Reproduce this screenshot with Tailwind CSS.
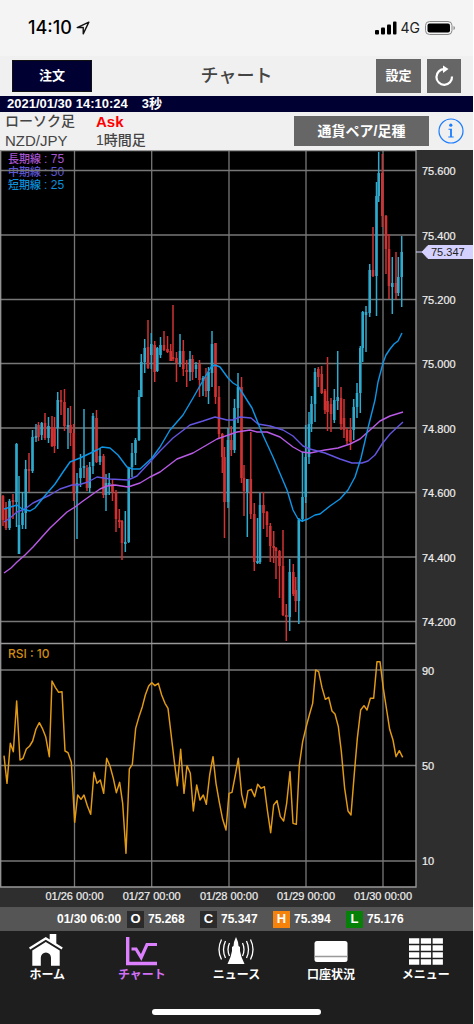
<!DOCTYPE html>
<html lang="ja">
<head>
    <meta charset="UTF-8">
    <meta name="viewport" content="width=device-width, initial-scale=1.0">
    <title>チャート</title>
    <script src="https://cdn.jsdelivr.net/npm/@tailwindcss/browser@4"></script>
</head>
<body class="bg-white min-h-screen flex flex-col pr-px font-['Liberation_Sans','Noto_Sans_CJK_JP',sans-serif]">
    <!-- Status bar -->
    <div class="bg-[#f4f4f4] h-14 flex items-center justify-between pl-7 pr-4">
        <div class="flex items-center gap-1 text-black">
            <span class="text-[18px] leading-6 font-medium font-['Inter',sans-serif]">14:10</span>
            <svg class="w-3.5 h-3.5" viewBox="0 0 12 12" fill="none" stroke="#111" stroke-width="1.2" stroke-linejoin="round"><path d="M11 1 1 5.6h5.2V11z"/></svg>
        </div>
        <div class="flex items-center gap-1">
            <svg class="w-[22px] h-[14px]" viewBox="0 0 22 14" fill="#000"><rect x="0" y="9" width="4" height="4.5" rx="1"/><rect x="6" y="6.5" width="4" height="7" rx="1"/><rect x="12" y="3.5" width="4" height="10" rx="1"/><rect x="18" y="0.5" width="3.5" height="13" rx="1"/></svg>
            <span class="text-[14px] leading-5 font-['Inter',sans-serif] text-[#222]">4G</span>
            <svg class="w-[32px] h-[14px] ml-px" viewBox="0 0 32 14"><rect x="0.5" y="0.5" width="26.5" height="13" rx="4" fill="none" stroke="#888"/><rect x="2.5" y="2.5" width="22.5" height="9" rx="2" fill="#000"/><path d="M28.5 5v4q1.5-.6 1.5-2t-1.5-2z" fill="#888"/></svg>
        </div>
    </div>

    <!-- Title bar -->
    <header class="bg-[#f0f0f0] h-10 grid grid-cols-[1fr_auto_1fr] items-center px-3">
        <button class="justify-self-start w-20 h-8 bg-[#000033] border border-[#111] text-white text-[13px] font-bold">注文</button>
        <h1 class="text-[18px] leading-6 font-medium text-[#444]">チャート</h1>
        <div class="justify-self-end flex gap-[6px]">
            <button class="w-[45px] h-[34px] bg-[#666] text-white text-[13px] font-bold">設定</button>
            <button aria-label="更新" class="w-[34px] h-[34px] bg-[#666] flex items-center justify-center">
                <svg class="w-[22px] h-[22px]" viewBox="0 0 22 22"><path d="M11.5 4.2A7.8 7.8 0 1 0 19 11.5" fill="none" stroke="#fff" stroke-width="2.2"/><path d="M10 0.5 15.5 4 10 8z" fill="#fff"/></svg>
            </button>
        </div>
    </header>

    <div class="bg-[#000033] h-4 flex items-center pl-[7px] gap-[14px] text-white text-[13px] leading-4 font-bold">
        <span>2021/01/30 14:10:24</span><span>3秒</span>
    </div>

    <section class="bg-[#f0f0f0] h-[38px] flex items-center pl-[5px] pr-[9px]">
        <div class="grid grid-cols-[91px_auto] text-[14px] leading-[19px] text-[#444] font-medium">
            <span>ローソク足</span>
            <span class="text-[15px] font-bold text-[#ff0000]">Ask</span>
            <span class="text-[15px]">NZD/JPY</span>
            <span>1時間足</span>
        </div>
        <button class="ml-auto w-[135px] h-[30px] bg-[#666] text-white text-[14px] font-bold">通貨ペア/足種</button>
        <button aria-label="情報" class="ml-[9px]">
            <svg class="w-[26px] h-[26px]" viewBox="0 0 26 26"><circle cx="13" cy="13" r="12" fill="none" stroke="#1a7cff" stroke-width="1.2"/><circle cx="12.8" cy="7.2" r="1.6" fill="#1a7cff"/><path d="M10.5 10.8h3.4v7.7h1.8v1h-5.4v-1h1.8v-6.7h-1.6z" fill="#1a7cff"/></svg>
        </button>
    </section>

    <!-- Price and RSI chart -->
    <svg class="block w-full bg-[#2e2e2e]" viewBox="0 150 473 757" font-family="'Liberation Sans','Noto Sans CJK JP',sans-serif">
        <rect x="0" y="150" width="416" height="737" fill="#000"/>
        <g font-size="11" font-weight="500">
            <text x="8" y="163" fill="#a855d0">長期線 <tspan font-size="12">: 75</tspan></text>
            <text x="8" y="176" fill="#5c55d6">中期線 <tspan font-size="12">: 50</tspan></text>
            <text x="8" y="189" fill="#0a90dc">短期線 <tspan font-size="12">: 25</tspan></text>
        </g>
        <path fill="none" stroke="#777" stroke-width="1.3" d="M0 170.5H416M0 235H416M0 299.5H416M0 363.5H416M0 428H416M0 492.5H416M0 557H416M0 621.5H416M0 670H416M0 765.5H416M0 861H416M74.5 150V887M151.7 150V887M229 150V887M306 150V887M383 150V887"/>
        <path fill="none" stroke="#999" stroke-width="1.3" d="M0.7 150.7H416V887H0.7zM0 643.5H416"/>
        <g id="candles"></g>
        <g fill="none" stroke-width="1.4" stroke-linejoin="round">
            <polyline stroke="#b95ae6" points="4,573 11,568 17,562 25,555 33,547 50,528 67,512 75,507 83,501 100,489 107,486 115,485 128,487 140,483 150,477 160,472 177,459 193,453 205,446 217,439 237,432 250,430 257,432 267,432 280,437 293,447 302,452 310,453 325,450 338,448 350,444 360,439 370,430 380,421 390,416 403,412"/>
            <polyline stroke="#6355e0" points="4,522 10,518 17,512 25,509 33,503 50,495 60,489 72,485 78,485 88,482 97,477 110,479 128,480 137,476 150,462 160,451 173,438 190,425 203,421 215,417 227,420 233,420 240,417 251,418 258,424 270,426 283,430 293,436 303,446 310,449 325,453 340,459 352,463 362,463 368,461 375,455 382,444 390,434 403,422"/>
            <polyline stroke="#0c96e8" points="4,509 17,505 22,509 30,511 35,508 43,498 55,484 63,472 70,462 80,458 97,450 102,447 110,448 118,455 127,467 133,469 140,469 152,458 160,447 170,430 183,415 193,398 205,377 211,367 215,365 220,367 228,378 233,383 238,386 245,397 252,408 262,433 273,457 287,490 293,510 298,519 302,521 308,519 315,515 320,514 330,506 340,499 348,490 355,477 361,458 368,428 375,400 378,382 383,363 386,355 390,349 394,344 398,341 402,333"/>
        </g>
        <!-- RSI points are kept in thirds of a pixel -->
        <polyline transform="translate(0 640) scale(0.33333)" fill="none" stroke="#e29a14" stroke-width="4.4" stroke-linejoin="round" points="12,347 21,430 31,310 40,335 50,183 60,360 69,355 79,327 89,318 98,303 108,267 118,248 127,265 137,290 148,350 156,123 166,142 176,157 186,155 195,333 204,338 214,367 224,547 233,465 243,478 252,465 262,497 272,523 282,397 291,430 301,420 311,460 320,355 330,378 340,415 349,458 359,427 368,490 378,640 388,387 397,373 407,265 417,230 427,200 436,165 446,138 455,128 465,137 475,130 485,165 495,190 504,205 513,280 523,365 532,437 542,328 552,460 561,377 571,400 580,513 590,435 600,480 610,465 619,493 629,405 639,350 648,430 658,487 668,538 678,570 687,460 696,457 706,405 715,355 725,463 735,503 744,452 754,448 764,470 773,433 783,445 793,440 802,510 812,578 821,495 831,482 841,530 851,543 860,490 870,395 879,550 889,553 898,375 908,305 918,263 928,225 938,190 947,90 956,95 966,143 976,178 986,172 996,213 1005,222 1015,260 1024,335 1034,445 1044,513 1053,525 1063,400 1072,295 1082,210 1092,197 1101,210 1111,175 1121,175 1131,65 1140,65 1150,145 1160,210 1169,268 1179,300 1188,350 1198,332 1208,352"/>
        <text x="8" y="658" font-size="12" font-weight="500" font-family="Inter,sans-serif" fill="#d08c10">RSI : 10</text>
        <g font-size="11" fill="#eee" stroke="#eee" stroke-width="0.2">
            <text x="422" y="175">75.600</text>
            <text x="422" y="240">75.400</text>
            <text x="422" y="304">75.200</text>
            <text x="422" y="368">75.000</text>
            <text x="422" y="433">74.800</text>
            <text x="422" y="497">74.600</text>
            <text x="422" y="562">74.400</text>
            <text x="422" y="626">74.200</text>
            <text x="422" y="675">90</text>
            <text x="422" y="770">50</text>
            <text x="422" y="865">10</text>
            <g text-anchor="middle">
                <text x="74.5" y="900">01/26 00:00</text>
                <text x="151.7" y="900">01/27 00:00</text>
                <text x="229" y="900">01/28 00:00</text>
                <text x="306" y="900">01/29 00:00</text>
                <text x="383" y="900">01/30 00:00</text>
            </g>
        </g>
        <path d="M416 252h6l6-6.5h45v13h-45l-6-6.5" fill="#d4d0ff" stroke="#d4d0ff"/>
        <text x="431" y="256" font-size="11" fill="#222">75.347</text>
    </svg>

    <!-- Selected candle values -->
    <div class="bg-[#555] h-6 flex items-center text-white text-[12px] leading-4 font-bold pl-[57px] gap-[15px]">
        <div class="flex items-center gap-1">
            <span class="w-[66px]">01/30 06:00</span>
            <span class="w-[17px] h-[17px] bg-[#2b2b2b] flex items-center justify-center text-[13px]">O</span>
            <span class="w-[37px]">75.268</span>
        </div>
        <div class="flex items-center gap-1">
            <span class="w-[17px] h-[17px] bg-[#2b2b2b] flex items-center justify-center text-[13px]">C</span>
            <span class="w-[37px]">75.347</span>
        </div>
        <div class="flex items-center gap-1">
            <span class="w-[17px] h-[17px] bg-[#f5820a] flex items-center justify-center text-[13px]">H</span>
            <span class="w-[37px]">75.394</span>
        </div>
        <div class="flex items-center gap-1">
            <span class="w-[17px] h-[17px] bg-[#078007] flex items-center justify-center text-[13px]">L</span>
            <span class="w-[37px]">75.176</span>
        </div>
    </div>

    <!-- Tab bar -->
    <footer class="bg-[#1e1e1e] grow flex flex-col justify-between">
        <nav class="flex text-white text-[12px] leading-4 font-bold pt-[2px]">
            <a href="#" class="flex-1 flex flex-col items-center">
                <svg class="w-[36px] h-[33px]" viewBox="0 0 36 33" fill="#fff"><path d="M16.8 4 20.7 6.4V1h6.6v9.4L33.8 14.5l-1.2 2L16.8 6.8 1.2 16.5 0 14.5z"/><path d="M16.8 9 30.7 17.6V32.7H22v-8a5.1 5.3 0 0 0-10.2 0v8H3.3V17.6z"/></svg>
                <span class="mt-px">ホーム</span>
            </a>
            <a href="#" class="flex-1 flex flex-col items-center text-[#d070f5]">
                <svg class="w-[36px] h-[33px]" viewBox="0 0 36 33" fill="none" stroke="#dc80ff"><path d="M3.7 4v26.5H33" stroke-width="3.4"/><path d="M7.5 16h4.5l5.2 8.5L23 11.5H33" stroke-width="3.2"/></svg>
                <span class="mt-px">チャート</span>
            </a>
            <a href="#" class="flex-1 flex flex-col items-center">
                <svg class="w-[40px] h-[33px]" viewBox="0 0 40 33" fill="none" stroke="#fff" stroke-width="1.3"><path fill="#fff" stroke="none" d="M20 4l2 5 .5 4 1.5 1v4l1.5 6 3 7H11.5l3-7 1.5-6v-4l1.5-1 .5-4z"/><path d="M13.5 10q-3 6.5 0 13M9.5 8q-4 8.5 0 17M5.5 6.5q-5 10 0 20M26.5 10q3 6.5 0 13M30.5 8q4 8.5 0 17M34.5 6.5q5 10 0 20"/></svg>
                <span class="mt-px">ニュース</span>
            </a>
            <a href="#" class="flex-1 flex flex-col items-center">
                <svg class="w-[34px] h-[33px]" viewBox="0 0 34 33"><rect x="0.5" y="8" width="33" height="21" rx="2.5" fill="#fff"/><path d="M0.5 23.5h33" stroke="#999" stroke-width="1.5"/></svg>
                <span class="mt-px">口座状況</span>
            </a>
            <a href="#" class="flex-1 flex flex-col items-center">
                <svg class="w-[34px] h-[33px]" viewBox="0 0 34 33" fill="none" stroke="#fff" stroke-width="5.7"><path stroke-dasharray="10.3 1.5" d="M0 8h34M0 15h34M0 22h34M0 29h34"/></svg>
                <span class="mt-px">メニュー</span>
            </a>
        </nav>
        <div class="mx-auto mb-[9px] w-[169px] h-[6px] rounded-full bg-white"></div>
    </footer>

    <script>
        // x, high, low, body top, body bottom, up (1) or down (0)
        const candles = [
            [3,495,526,496,520,0],[6,502,530,509,528,0],[9.5,499,530,501,528,1],[13,494,519,500,502,0],[16.5,443,527,444,502,1],
            [19,476,554,525,554,1],[22.5,492,529,513,525,1],[25.7,460,529,469,513,1],[29,453,492,469,471,0],[32.5,430,473,437,471,1],
            [36,424,442,436,438,1],[38.5,422,441,425,437,0],[41.7,422,440,423,435,1],[45,413,440,423,438,0],[48.5,417,443,426,438,1],
            [52,416,447,427,446,0],[54.5,417,453,428,446,0],[57.7,392,449,400,428,1],[61,390,415,400,402,0],[64.5,389,431,402,426,0],
            [68,408,449,425,427,1],[70.5,406,446,425,433,0],[73.7,424,501,433,493,0],[77,473,539,483,493,1],[80.5,454,487,468,478,1],
            [84,409,478,466,468,1],[87,465,491,468,488,0],[89.7,462,493,467,488,1],[93,413,474,416,466,1],[96.5,410,463,418,462,0],
            [100,448,465,456,462,1],[103.5,454,498,456,495,0],[106,474,511,483,495,1],[109.2,473,495,483,485,1],[112.5,479,501,484,492,0],
            [116,490,532,492,519,0],[119.3,509,528,520,522,0],[122,520,560,521,543,0],[125.3,511,552,542,544,1],[128.7,468,543,468,542,1],
            [132,443,477,453,467,1],[135.5,438,465,440,453,1],[139,390,441,397,440,1],[141.3,354,397,362,397,1],[144.7,339,373,348,362,1],
            [148,320,369,347,368,0],[151.3,333,369,344,355,1],[154.7,341,382,345,372,0],[157.3,347,372,348,371,1],[160.5,337,358,345,355,1],
            [164,331,351,345,350,0],[167.5,336,353,349,352,0],[170.7,344,361,351,361,0],[173,305,361,357,359,0],[176.5,352,382,358,363,0],
            [180,334,367,351,363,1],[183.3,340,376,351,369,0],[186.7,360,387,370,372,0],[190,351,381,359,372,1],[192.5,355,380,359,372,0],
            [196,362,378,365,369,1],[199.5,360,397,364,380,0],[203,376,396,378,381,1],[206,368,397,377,391,0],[208.5,367,404,372,391,1],
            [212,331,387,344,373,1],[215.5,343,404,343,397,0],[219,386,439,397,434,0],[222.3,433,473,434,457,0],[224.5,447,538,457,502,0],
            [228,428,508,440,502,1],[231.3,426,456,440,450,0],[234.5,399,453,408,450,1],[238,373,423,387,408,1],[241.5,377,483,387,478,0],
            [244,465,516,478,491,0],[247.3,479,537,479,492,1],[250.8,432,519,479,514,0],[254.3,503,571,514,562,0],[257.5,518,564,561,563,1],
            [260,493,564,505,562,1],[263.5,492,529,505,513,0],[267,511,537,512,525,0],[270.3,523,562,526,546,0],[273.7,531,563,546,548,0],
            [276,547,579,548,551,0],[279.5,550,598,551,566,0],[283,530,616,566,615,0],[286.3,604,641,615,617,0],[289.7,559,631,572,617,1],
            [293.3,564,596,572,594,0],[295.7,577,612,590,601,0],[298.8,518,624,520,601,1],[302.5,452,522,497,519,1],[305.7,425,503,457,497,1],
            [309,412,464,424,457,1],[311.5,396,432,404,424,1],[315,368,422,372,404,1],[318.3,367,387,369,377,0],[321.7,366,394,374,393,0],
            [325,389,414,391,410,0],[327.5,357,431,401,412,0],[331,398,432,404,414,0],[334.3,389,423,400,420,1],[337.7,351,410,397,401,1],
            [341,387,430,398,424,0],[344,399,438,418,430,0],[347,428,444,430,441,0],[350.5,418,450,430,442,0],[353.7,399,440,407,430,1],
            [357,383,418,393,407,1],[360.3,346,413,348,393,1],[362.7,311,362,312,348,1],[366,306,352,312,315,1],[369.7,264,317,270,313,1],
            [373,227,277,270,276,0],[376.5,182,316,196,276,1],[378.7,152,202,173,196,1],[382.3,154,227,173,216,0],[386,215,274,216,249,0],
            [389,234,299,249,286,0],[392.3,257,314,283,287,1],[396,252,299,283,293,0],[398.3,257,296,277,293,1],[401.7,236,307,252,277,1]
        ];

        const group = document.getElementById('candles');

        function addRect(x, top, bottom, width, color) {
            const rect = document.createElementNS('http://www.w3.org/2000/svg', 'rect');
            rect.setAttribute('x', x - width / 2);
            rect.setAttribute('y', top);
            rect.setAttribute('width', width);
            rect.setAttribute('height', bottom - top);
            rect.setAttribute('fill', color);
            group.appendChild(rect);
        }

        candles.forEach(([x, high, low, top, bottom, up]) => {
            const color = up ? '#2fa9cc' : '#cf3232';
            addRect(x, high, low, 1.5, color);
            addRect(x, top, bottom, 2.6, color);
        });
    </script>
</body>
</html>
